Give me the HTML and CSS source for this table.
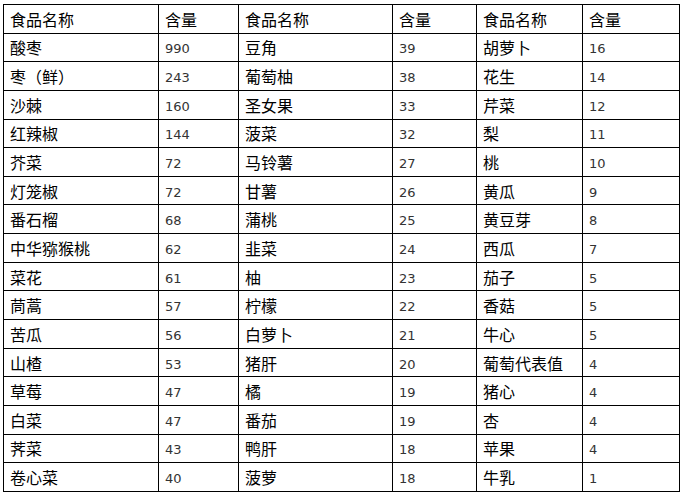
FILE: index.html
```html
<!DOCTYPE html>
<html lang="zh-CN">
<head>
<meta charset="utf-8">
<title>食品含量表</title>
<link rel="stylesheet" href="styles.css">
</head>
<body>
<table class="food-table">
  <colgroup>
    <col class="c-name1"><col class="c-num1"><col class="c-name2"><col class="c-num2"><col class="c-name3"><col class="c-num3">
  </colgroup>
  <thead>
    <tr><th>食品名称</th><th>含量</th><th>食品名称</th><th>含量</th><th>食品名称</th><th>含量</th></tr>
  </thead>
  <tbody>
    <tr><td>酸枣</td><td class="num">990</td><td>豆角</td><td class="num">39</td><td>胡萝卜</td><td class="num">16</td></tr>
    <tr><td>枣（鲜）</td><td class="num">243</td><td>葡萄柚</td><td class="num">38</td><td>花生</td><td class="num">14</td></tr>
    <tr><td>沙棘</td><td class="num">160</td><td>圣女果</td><td class="num">33</td><td>芹菜</td><td class="num">12</td></tr>
    <tr><td>红辣椒</td><td class="num">144</td><td>菠菜</td><td class="num">32</td><td>梨</td><td class="num">11</td></tr>
    <tr><td>芥菜</td><td class="num">72</td><td>马铃薯</td><td class="num">27</td><td>桃</td><td class="num">10</td></tr>
    <tr><td>灯笼椒</td><td class="num">72</td><td>甘薯</td><td class="num">26</td><td>黄瓜</td><td class="num">9</td></tr>
    <tr><td>番石榴</td><td class="num">68</td><td>蒲桃</td><td class="num">25</td><td>黄豆芽</td><td class="num">8</td></tr>
    <tr><td>中华猕猴桃</td><td class="num">62</td><td>韭菜</td><td class="num">24</td><td>西瓜</td><td class="num">7</td></tr>
    <tr><td>菜花</td><td class="num">61</td><td>柚</td><td class="num">23</td><td>茄子</td><td class="num">5</td></tr>
    <tr><td>茼蒿</td><td class="num">57</td><td>柠檬</td><td class="num">22</td><td>香菇</td><td class="num">5</td></tr>
    <tr><td>苦瓜</td><td class="num">56</td><td>白萝卜</td><td class="num">21</td><td>牛心</td><td class="num">5</td></tr>
    <tr><td>山楂</td><td class="num">53</td><td>猪肝</td><td class="num">20</td><td>葡萄代表值</td><td class="num">4</td></tr>
    <tr><td>草莓</td><td class="num">47</td><td>橘</td><td class="num">19</td><td>猪心</td><td class="num">4</td></tr>
    <tr><td>白菜</td><td class="num">47</td><td>番茄</td><td class="num">19</td><td>杏</td><td class="num">4</td></tr>
    <tr><td>荠菜</td><td class="num">43</td><td>鸭肝</td><td class="num">18</td><td>苹果</td><td class="num">4</td></tr>
    <tr><td>卷心菜</td><td class="num">40</td><td>菠萝</td><td class="num">18</td><td>牛乳</td><td class="num">1</td></tr>
  </tbody>
</table>
</body>
</html>
```

FILE: styles.css
```css
html, body {
  margin: 0;
  padding: 0;
  background: #ffffff;
}

body {
  padding: 4px 0 0 3px;
  font-family: "Noto Sans CJK SC", "Noto Sans", sans-serif;
  color: #000000;
}

.food-table {
  border-collapse: collapse;
  table-layout: fixed;
  width: 677px;
}

.c-name1 { width: 155px; }
.c-num1 { width: 80px; }
.c-name2 { width: 154px; }
.c-num2 { width: 84px; }
.c-name3 { width: 106px; }
.c-num3 { width: 97px; }

.food-table tr {
  height: 28.65px;
}

.food-table th,
.food-table td {
  border: 1px solid #000000;
  padding: 0 0 0 6px;
  text-align: left;
  font-weight: normal;
  font-size: 16px;
  line-height: 18px;
  vertical-align: middle;
  white-space: nowrap;
}

.food-table td.num {
  font-family: "DejaVu Sans", "Liberation Sans", sans-serif;
  font-size: 13px;
  color: #333333;
  padding-top: 4px;
}
```
